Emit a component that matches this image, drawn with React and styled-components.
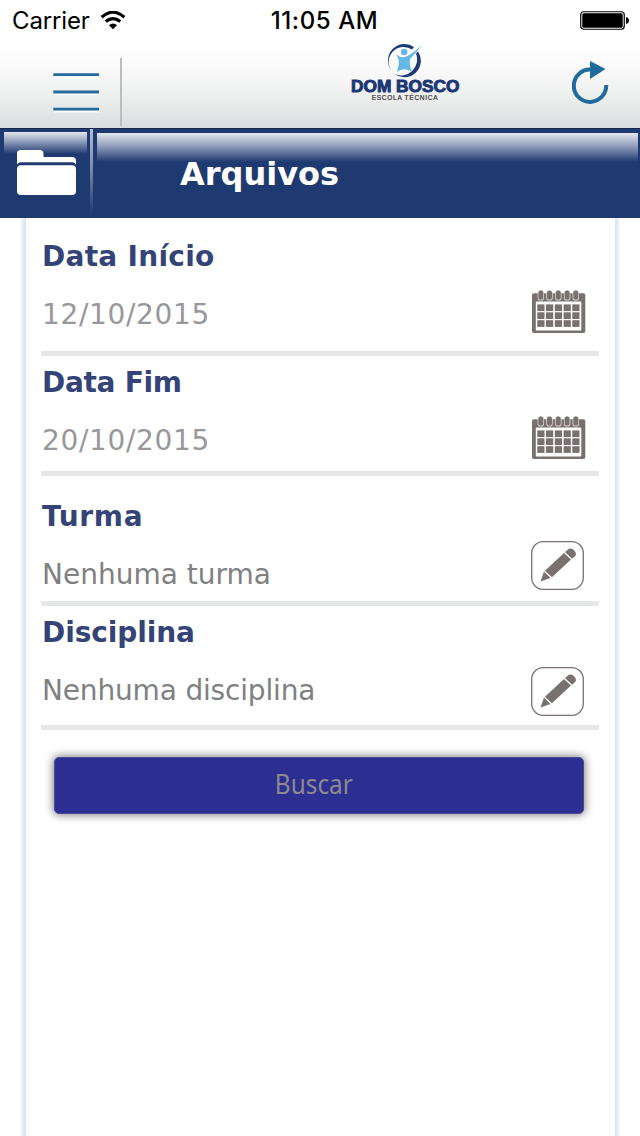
import React from "react";
import styled, { createGlobalStyle } from "styled-components";

const Global = createGlobalStyle`
  * { box-sizing: border-box; }
  body { margin: 0; background: #fff; font-family: Verdana, "DejaVu Sans", sans-serif; }
`;

const Screen = styled.div`
  width: 640px;
  height: 1136px;
  display: flex;
  flex-direction: column;
  overflow: hidden;
`;

const Top = styled.header`
  height: 128px;
  background: linear-gradient(#fff 0, #fff 44px, #f7f7f8 76px, #ebecec 100px, #dcdddf 127px);
`;

const StatusBar = styled.div`
  height: 40px;
  padding: 1px 11px 0 12px;
  display: grid;
  grid-template-columns: 1fr auto 1fr;
  align-items: center;
  font-family: Inter, sans-serif;
  font-size: 24px;
  line-height: 40px;
  color: #000;
`;

const Carrier = styled.div`
  display: flex;
  align-items: center;
  gap: 10px;
  letter-spacing: -0.15px;

  svg { margin-top: -2px; }
`;

const Clock = styled.div`
  font-weight: 500;
  letter-spacing: 0.6px;
  padding-left: 8px;
`;

const Battery = styled.svg`
  justify-self: end;
  margin-top: -1px;
`;

const NavBar = styled.nav`
  height: 88px;
  display: flex;
  align-items: flex-start;
`;

const MenuButton = styled.div`
  width: 122px;
  height: 68px;
  margin-top: 18px;
  padding: 14px 0 0 53px;
  border-right: 2px solid #bcbdbf;
`;

const Brand = styled.div`
  width: 130px;
  margin: 3px 0 0 218px;
  display: flex;
  flex-direction: column;
  align-items: center;
`;

const BrandName = styled.div`
  margin-top: 1px;
  font: 900 16px/16px "Liberation Sans", sans-serif;
  -webkit-text-stroke: 0.9px #1b3674;
  color: #1b3674;
  white-space: nowrap;
  transform: scaleX(${(p) => p.$stretch});
`;

const BrandTag = styled.div`
  margin-top: -1px;
  font: 6.5px/7px "Liberation Sans", sans-serif;
  -webkit-text-stroke: 0.2px #333;
  letter-spacing: 0.75px;
  color: #333;
  white-space: nowrap;
`;

const Refresh = styled.svg`
  margin: 20px 0 0 102px;
`;

const TitleBar = styled.div`
  height: 90px;
  display: flex;
  background: #1f3a70;
  border-top: 1px solid #14284f;
`;

const FolderTab = styled.div`
  width: 83px;
  height: 85px;
  margin: 3px 0 0 4px;
  padding: 18px 0 0 13px;
  background: linear-gradient(#e3e7ef 0, #8a99b8 10px, #1f3a70 22px);
`;

const Divider = styled.div`
  width: 3px;
  margin: 0 4px 0 3px;
  background: linear-gradient(#b4bed1, #8290b0 40%, #1f3a70 96%);
`;

const TitlePane = styled.h1`
  flex: 1;
  height: 80px;
  margin: 4px 2px 0 0;
  padding-left: 83px;
  background: linear-gradient(#e3e7ef 0, #8a99b8 14px, #1f3a70 29px);
  color: #fff;
  font-size: 32px;
  line-height: 82px;
`;

const Body = styled.main`
  flex: 1;
  margin: 0 19px;
  display: grid;
  grid-template-columns: 7px 1fr 6px;
`;

const Edge = styled.div`
  background: linear-gradient(to ${(p) => p.$side}, #fff, #edf3f6 45%, #d9e4eb 85%);
`;

const Form = styled.form`
  padding: 0 16px 0 15px;
`;

const Field = styled.section`
  height: ${(p) => p.$height}px;
  padding: ${(p) => p.$top}px 0 0 1px;
  border-bottom: 5px solid #e6e7e8;
`;

const Label = styled.h2`
  margin: 0;
  height: 36px;
  color: #344476;
  font-size: 28px;
  line-height: 38px;
  letter-spacing: ${(p) => p.$spacing}px;
`;

const ValueRow = styled.div`
  display: flex;
  justify-content: space-between;
  align-items: flex-start;
  padding-right: ${(p) => p.$right}px;
`;

const Value = styled.span`
  margin-top: 22px;
  font-size: 28px;
  line-height: 38px;
  color: ${(p) => (p.$muted ? "#98989b" : "#808083")};
  letter-spacing: ${(p) => p.$spacing}px;
`;

const IconSlot = styled.div`
  margin-top: ${(p) => p.$top}px;
  display: flex;
`;

const SearchButton = styled.button`
  display: block;
  width: 530px;
  height: 57px;
  margin: 27px 0 0 13px;
  padding: 0 0 5px;
  border: 1px solid #4b4c93;
  border-radius: 5px;
  background: #2d2e91;
  box-shadow: 0 0 8px 1px rgba(0, 0, 0, 0.5);
  color: #8b8b8f;
  font: 28px/50px "Noto Sans", sans-serif;
`;

const Condensed = styled.span`
  display: inline-block;
  margin-right: 10px;
  transform: scaleX(0.87);
`;

const WifiIcon = () => (
  <svg width="26" height="19" viewBox="0 0 26 19" fill="none" stroke="#000" strokeWidth="3.2">
    <path d="M1.7 6.3Q13-4 24.3 6.3" />
    <path d="M5.7 10.6Q13 4.5 20.3 10.6" />
    <path d="M13 18.2 9 14.2Q13 10.8 17 14.2Z" fill="#000" stroke="none" />
  </svg>
);

const BatteryIcon = () => (
  <Battery width="49" height="19" viewBox="0 0 49 19">
    <rect x=".75" y=".75" width="43.5" height="17.5" rx="3" fill="#fff" stroke="#000" strokeWidth="1.2" />
    <rect x="2.3" y="2.3" width="40.4" height="14.4" rx="1.5" />
    <path d="M46 6q3 1 3 3.5T46 13Z" />
  </Battery>
);

const MenuIcon = () => (
  <svg width="46" height="42" viewBox="0 0 46 42">
    <path d="M1 5h45M1 22h45M1 39.5h45" stroke="#fff" strokeWidth="2" />
    <path d="M.3 2.7H46M.3 20H46M.3 37.2H46" stroke="#246a9c" strokeWidth="2.8" />
  </svg>
);

const Emblem = () => (
  <svg width="34" height="35" viewBox="0 0 34 35">
    <path d="M26 4A16.5 16.5 0 0 0 3 27A15 15 0 0 1 24 6.5Z" fill="#1b3a78" />
    <path d="M30 8.5A16.5 16.5 0 0 1 6.5 31A16 16 0 0 0 28 10.5Z" fill="#1b3a78" />
    <circle cx="16.2" cy="9" r="3.3" fill="#65b7e8" />
    <path d="M8.4 11.4Q11.5 14.3 16 14.2Q23 12.5 33.5 2Q29 9.5 22 16Q21 22 24 28.8Q20 26 16.3 26.2Q12.5 26 8.8 28.8Q11.6 22 10.6 16.6Z" fill="#65b7e8" />
  </svg>
);

const RefreshIcon = () => (
  <Refresh width="38" height="45" viewBox="0 0 38 45">
    <path d="M34.2 25A16.2 16.2 0 1 1 18 9.5" fill="none" stroke="#1f6c9b" strokeWidth="4" />
    <path d="M18 1v18L33.5 9Z" fill="#1f6c9b" />
  </Refresh>
);

const FolderIcon = () => (
  <svg width="59" height="45" viewBox="0 0 59 45" fill="#fff">
    <path d="M0 15V3.5Q0 0 3.5 0H23Q26.5 0 26.5 4V7H55Q59 7 59 11V15Q58 12.2 55 12.2H4Q1 12.2 0 15Z" />
    <rect y="15.3" width="59" height="29.7" rx="4" />
  </svg>
);

const CalendarIcon = () => (
  <svg width="54" height="44" viewBox="0 0 54 44" fill="#79716f">
    <rect y="3.3" width="53.3" height="39.8" rx="2" />
    <rect x="3.8" y="11.6" width="45.5" height="28.9" rx="1" fill="#fff" />
    {[8.8, 17.5, 26.3, 35.1, 43.8].map((x) => (
      <React.Fragment key={x}>
        <rect x={x - 3.2} y="0" width="6.4" height="10.6" rx="3.2" fill="#e2e0df" />
        <rect x={x - 2.5} y=".5" width="5" height="9.2" rx="2.5" />
        {[14.4, 22.3, 30.2].map((y) => (
          <rect key={y} x={x - 3.5} y={y} width="7.2" height="6.7" />
        ))}
      </React.Fragment>
    ))}
  </svg>
);

const EditIcon = () => (
  <svg width="53" height="49" viewBox="0 0 53 49">
    <rect x=".7" y=".7" width="51.6" height="47.6" rx="11.5" fill="#fff" stroke="#79716f" strokeWidth="1.3" />
    <g fill="#79716f">
      <path d="M9.5 40.5 13 30.6 19.6 37Z" />
      <path d="M13.9 29.8 33 12 40 18.5 20.9 36.3Z" />
      <path d="M34 11.1 36.3 9Q40 6 43.3 9.5Q46.5 13 43.7 15.6L41 17.7Z" />
    </g>
  </svg>
);

const fields = [
  { label: "Data Início", value: "12/10/2015", kind: "date", height: 138, top: 20, icon: 16, ls: 0.27, vs: 0.65 },
  { label: "Data Fim", value: "20/10/2015", kind: "date", height: 120, top: 8, icon: 16, ls: -0.3, vs: 0.65 },
  { label: "Turma", value: "Nenhuma turma", kind: "pick", height: 130, top: 22, icon: 7, ls: 0.7, vs: 0 },
  { label: "Disciplina", value: "Nenhuma disciplina", kind: "pick", height: 124, top: 8, icon: 17, ls: -0.1, vs: -0.17 },
];

export default function App() {
  return (
    <Screen>
      <Global />
      <Top>
        <StatusBar>
          <Carrier>Carrier <WifiIcon /></Carrier>
          <Clock>11:05 AM</Clock>
          <BatteryIcon />
        </StatusBar>
        <NavBar>
          <MenuButton><MenuIcon /></MenuButton>
          <Brand>
            <Emblem />
            <BrandName $stretch={1.08}>DOM BOSCO</BrandName>
            <BrandTag>ESCOLA TÉCNICA</BrandTag>
          </Brand>
          <RefreshIcon />
        </NavBar>
      </Top>
      <TitleBar>
        <FolderTab><FolderIcon /></FolderTab>
        <Divider />
        <TitlePane>Arquivos</TitlePane>
      </TitleBar>
      <Body>
        <Edge $side="right" />
        <Form onSubmit={(e) => e.preventDefault()}>
          {fields.map((f) => (
            <Field key={f.label} $height={f.height} $top={f.top}>
              <Label $spacing={f.ls}>{f.label}</Label>
              <ValueRow $right={f.kind === "date" ? 13 : 15}>
                <Value $muted={f.kind === "date"} $spacing={f.vs}>{f.value}</Value>
                <IconSlot $top={f.icon}>
                  {f.kind === "date" ? <CalendarIcon /> : <EditIcon />}
                </IconSlot>
              </ValueRow>
            </Field>
          ))}
          <SearchButton><Condensed>Buscar</Condensed></SearchButton>
        </Form>
        <Edge $side="left" />
      </Body>
    </Screen>
  );
}
